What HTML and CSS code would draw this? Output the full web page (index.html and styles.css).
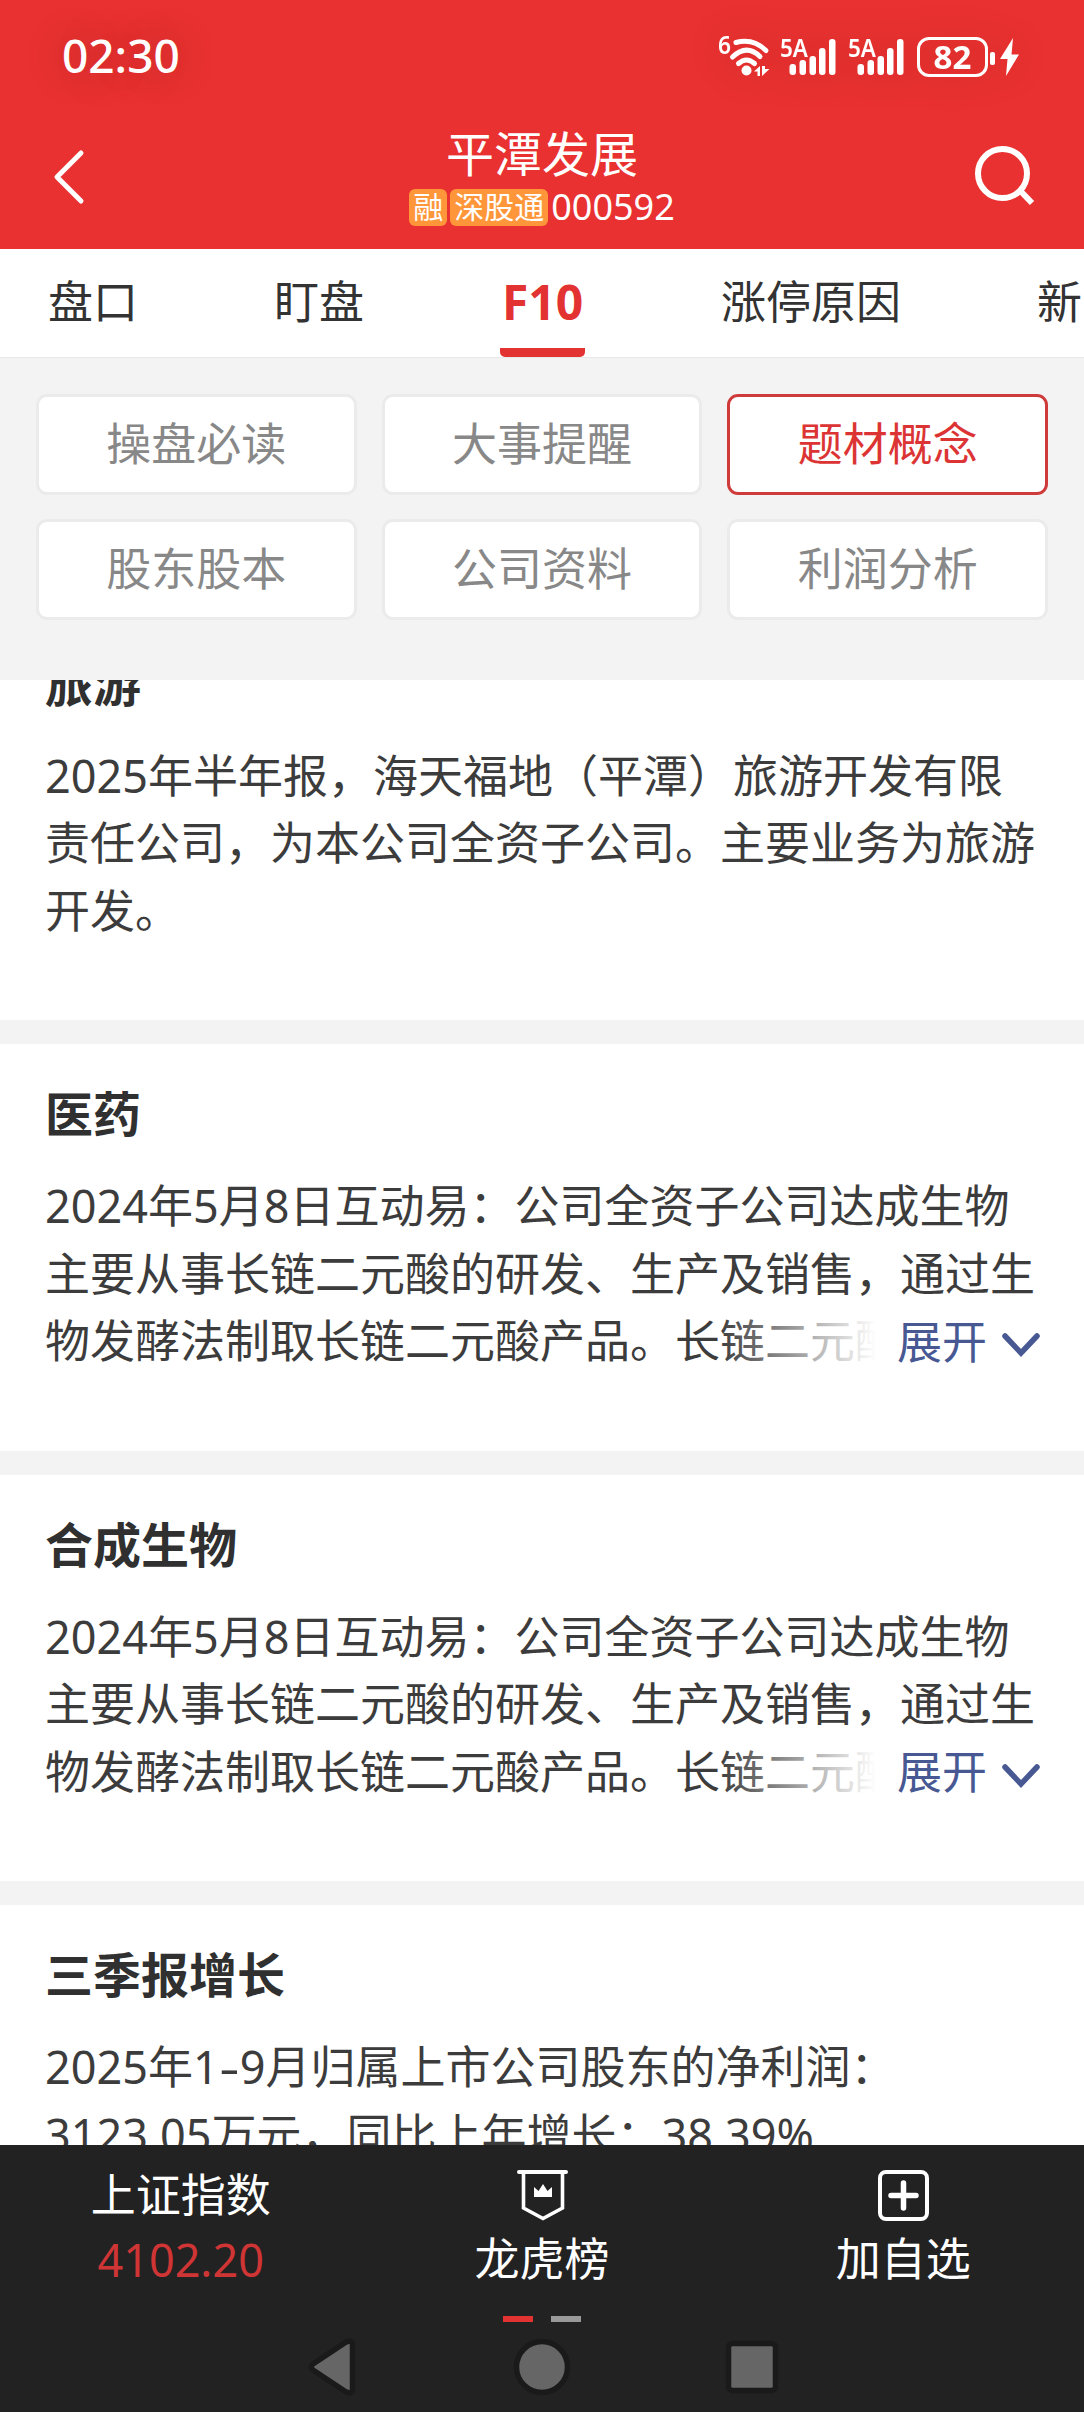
FILE: index.html
```html
<!doctype html>
<html lang="zh-CN">
<head>
<meta charset="utf-8">
<title>平潭发展 F10</title>
<link rel="stylesheet" href="styles.css">
</head>

<body>

<div class="head">
	<div class="status">
		<span class="time">02:30</span>
		<div class="status-r">
			<svg class="wifi" width="52" height="44" viewBox="0 0 52 44">
				<text x="-1" y="19" font-size="26" font-weight="600" textLength="13" lengthAdjust="spacingAndGlyphs">6</text>
				<g fill="none" stroke="#fff" stroke-width="5" stroke-linecap="round">
					<path d="M17 7.500Q34 3 47 15.500"/>
					<path d="M13.500 22Q27.500 8.500 41 21.500"/>
					<path d="M19.500 28.500Q27.500 21.500 35.500 28.500"/>
				</g>
				<circle cx="27.500" cy="35.500" r="5"/>
				<path d="M35 36.500l6-5.500v10h-2.500V36.500zM43 31v10l7.500-7H46V31z"/>
			</svg>
			<svg class="signal" width="54" height="44" viewBox="0 0 54 44">
				<text x="-2" y="22" font-size="26" font-weight="600" textLength="28" lengthAdjust="spacingAndGlyphs">5A</text>
				<rect x="7.500" y="29" width="6.500" height="11" rx="3"/>
				<rect x="17.500" y="25" width="6.500" height="15" rx="3"/>
				<rect x="27.500" y="21" width="6.500" height="19" rx="3"/>
				<rect x="37" y="13" width="6.500" height="27" rx="3"/>
				<rect x="47" y="4" width="6.500" height="36" rx="3"/>
			</svg>
			<svg class="signal" width="54" height="44" viewBox="0 0 54 44">
				<text x="-2" y="22" font-size="26" font-weight="600" textLength="28" lengthAdjust="spacingAndGlyphs">5A</text>
				<rect x="7.500" y="29" width="6.500" height="11" rx="3"/>
				<rect x="17.500" y="25" width="6.500" height="15" rx="3"/>
				<rect x="27.500" y="21" width="6.500" height="19" rx="3"/>
				<rect x="37" y="13" width="6.500" height="27" rx="3"/>
				<rect x="47" y="4" width="6.500" height="36" rx="3"/>
			</svg>
			<span class="battery">82</span>
			<svg width="31" height="44" viewBox="0 0 31 44">
				<rect x="2" y="17" width="5" height="13" rx="2"/>
				<path d="M25 3L12 24h7.500L18 41l13-21.500h-7.500z"/>
			</svg>
		</div>
	</div>
	<div class="bar">
		<svg class="back" width="32" height="56" viewBox="0 0 32 56"><path d="M28 4L4 28l24 24"/></svg>
		<div class="name">
			<h1>平潭发展</h1>
			<p><em>融</em><em>深股通</em>000592</p>
		</div>
		<svg class="search" width="62" height="62" viewBox="0 0 62 62"><circle cx="28.500" cy="29.500" r="24.500"/><path d="M46 46.500l12 12.500"/></svg>
	</div>
</div>

<div class="tabs">
	<span>盘口</span>
	<span>盯盘</span>
	<span class="on">F10</span>
	<span>涨停原因</span>
	<span>新闻</span>
</div>

<div class="menu">
	<a>操盘必读</a>
	<a>大事提醒</a>
	<a class="on">题材概念</a>
	<a>股东股本</a>
	<a>公司资料</a>
	<a>利润分析</a>
</div>

<div class="list">
	<div class="item">
		<h2>旅游</h2>
		<div class="txt">2025年半年报，海天福地（平潭）旅游开发有限责任公司，为本公司全资子公司。主要业务为旅游开发。</div>
	</div>
	<div class="item">
		<h2>医药</h2>
		<div class="txt">2024年5月8日互动易：公司全资子公司达成生物主要从事长链二元酸的研发、生产及销售，通过生物发酵法制取长链二元酸产品。长链二元酸
			<span class="more">展开<svg width="40" height="26" viewBox="0 0 40 26"><path d="M4 4l16 17L36 4"/></svg></span>
		</div>
	</div>
	<div class="item">
		<h2>合成生物</h2>
		<div class="txt">2024年5月8日互动易：公司全资子公司达成生物主要从事长链二元酸的研发、生产及销售，通过生物发酵法制取长链二元酸产品。长链二元酸
			<span class="more">展开<svg width="40" height="26" viewBox="0 0 40 26"><path d="M4 4l16 17L36 4"/></svg></span>
		</div>
	</div>
	<div class="item">
		<h2>三季报增长</h2>
		<div class="txt">2025年1<i>-</i>9月归属上市公司股东的净利润：<br>3123.05万元，同比上年增长：38.39%</div>
	</div>
</div>

<div class="foot">
	<div class="tools">
		<div>
			<span>上证指数</span>
			<b>4102.20</b>
		</div>
		<div>
			<svg width="52" height="52" viewBox="0 0 52 52">
				<path d="M3 3h47" fill="none" stroke="#fff" stroke-width="4" stroke-linecap="round"/>
				<path d="M7.500 3v36L27 49.500 46.500 39V3" fill="none" stroke="#fff" stroke-width="3.600"/>
				<path d="M18 18l4.500 4 4.500-7 4.500 7 4.500-4v10H18z" fill="#fff"/>
			</svg>
			<span>龙虎榜</span>
		</div>
		<div>
			<svg width="52" height="52" viewBox="0 0 52 52">
				<rect x="3" y="3" width="47" height="47" rx="6" fill="none" stroke="#fff" stroke-width="4"/>
				<path d="M26.500 14v25M14 26.500h25" stroke="#fff" stroke-width="5.500" stroke-linecap="round"/>
			</svg>
			<span>加自选</span>
		</div>
	</div>
	<div class="dots"><i class="on"></i><i></i></div>
	<div class="nav">
		<svg width="60" height="60" viewBox="0 0 60 60"><path d="M11 27L44.500 4.800q5.500-2 6 2.700v45q-.5 4.700-6 2.700L11 33q-3.500-3 0-6z"/></svg>
		<svg width="60" height="60" viewBox="0 0 60 60"><circle cx="30" cy="30" r="25.500"/></svg>
		<svg width="60" height="60" viewBox="0 0 60 60"><rect x="6.500" y="6.500" width="47" height="47" rx="4"/></svg>
	</div>
</div>

</body>
</html>
```
FILE: styles.css
```css
*{ margin:0; padding:0; box-sizing:border-box; font-style:normal;}
body{ width:1084px; height:2412px; overflow:hidden; background:#fff; color:#333; font-family:"Noto Sans","Noto Sans CJK SC",sans-serif; font-size:45px;}
svg{ display:block; flex:none; overflow:visible;}

.head{ height:249px; background:#e83130; color:#fff;}
.status{ height:109px; padding:0 65px 0 62px; display:flex; justify-content:space-between; align-items:center;}
.time{ font-size:46px; font-weight:500; line-height:60px; text-shadow:0 0 40px rgba(0,0,0,.25);}
.status-r{ display:flex; align-items:center; padding-top:4px; filter:drop-shadow(0 0 20px rgba(0,0,0,.12));}
.status-r svg{ fill:#fff;}
.wifi{ margin-right:11px;}
.signal{ margin-right:14px;}
.battery{ width:71px; height:40px; margin-left:-1px; border:3px solid #fff; border-radius:12px; font-size:33px; font-weight:700; line-height:34px; text-align:center;}
.bar{ height:140px; padding:0 48px 0 53px; display:flex; justify-content:space-between; align-items:flex-start;}
.back{ margin-top:40px; fill:none; stroke:#fff; stroke-width:5; stroke-linecap:round; stroke-linejoin:round;}
.search{ margin-top:35px; fill:none; stroke:#fff; stroke-width:6;}
.name{ padding-top:12px; margin-left:25px;}
.name h1{ font-size:48px; font-weight:400; line-height:66px; text-align:center;}
.name p{ display:flex; align-items:center; margin-top:1px; font-size:36px; line-height:38px;}
.name em{ height:37px; padding:0 4px; margin-right:3px; border-radius:6px; background:#ff963a; font-size:30px; line-height:36px;}

.tabs{ height:109px; border-bottom:1px solid #e8e8e8; padding-left:48px; display:flex; gap:136px; overflow:hidden; white-space:nowrap;}
.tabs span{ flex:none; height:108px; line-height:106px; color:#333;}
.tabs .on{ width:85px; border-bottom:9px solid #e33232; border-radius:0 0 5px 5px; font-size:48px; font-weight:700; text-align:center; color:#e33232;}

.menu{ height:322px; padding:36px 36px 0; background:#f3f3f3; display:grid; grid-template-columns:repeat(3,1fr); grid-auto-rows:101px; gap:24px 25px;}
.menu a{ border:3px solid #ebebeb; border-radius:11px; background:#fff; color:#888; line-height:94px; text-align:center;}
.menu .on{ border-color:#cf3a3a; color:#dc3434;}

.list{ height:1465px; overflow:hidden;}
.item{ height:430.6px; padding:38px 45px 0; border-bottom:24px solid #f3f3f3;}
.item:first-child{ margin-top:-66.5px;}
.item h2{ height:90px; font-size:48px; font-weight:700; line-height:64px; color:#303030;}
.txt{ position:relative; height:203px; line-height:67.6px; color:#3c3c3c;}
.txt i{ display:inline-block; width:21px; line-height:1; text-align:center; transform:scaleX(1.4);}
/* 渐隐后接展开按钮 */
.more{ position:absolute; right:-2px; bottom:0; width:323px; padding-left:179px; display:flex; align-items:center; justify-content:space-between; color:#475893; background:linear-gradient(to right,rgba(255,255,255,0),#fff 158px);}
.more svg{ margin-top:8px; fill:none; stroke:#475893; stroke-width:5.5; stroke-linecap:round;}

.foot{ height:267px; background:#222; color:#fff;}
.tools{ height:171px; display:flex;}
.tools div{ flex:1; display:flex; flex-direction:column; align-items:center; padding-top:17px;}
.tools span,.tools b{ line-height:65px; font-weight:400;}
.tools b{ color:#d03535;}
.tools svg{ margin:7px 0 5px;}
.dots{ display:flex; justify-content:center; gap:18px;}
.dots i{ width:30px; height:6px; background:#999;}
.dots .on{ background:#e33232;}
.nav{ margin-top:15px; display:flex; justify-content:center; gap:150px;}
.nav svg{ fill:#666; stroke:#1a1a1a; stroke-width:5.5;}
```
